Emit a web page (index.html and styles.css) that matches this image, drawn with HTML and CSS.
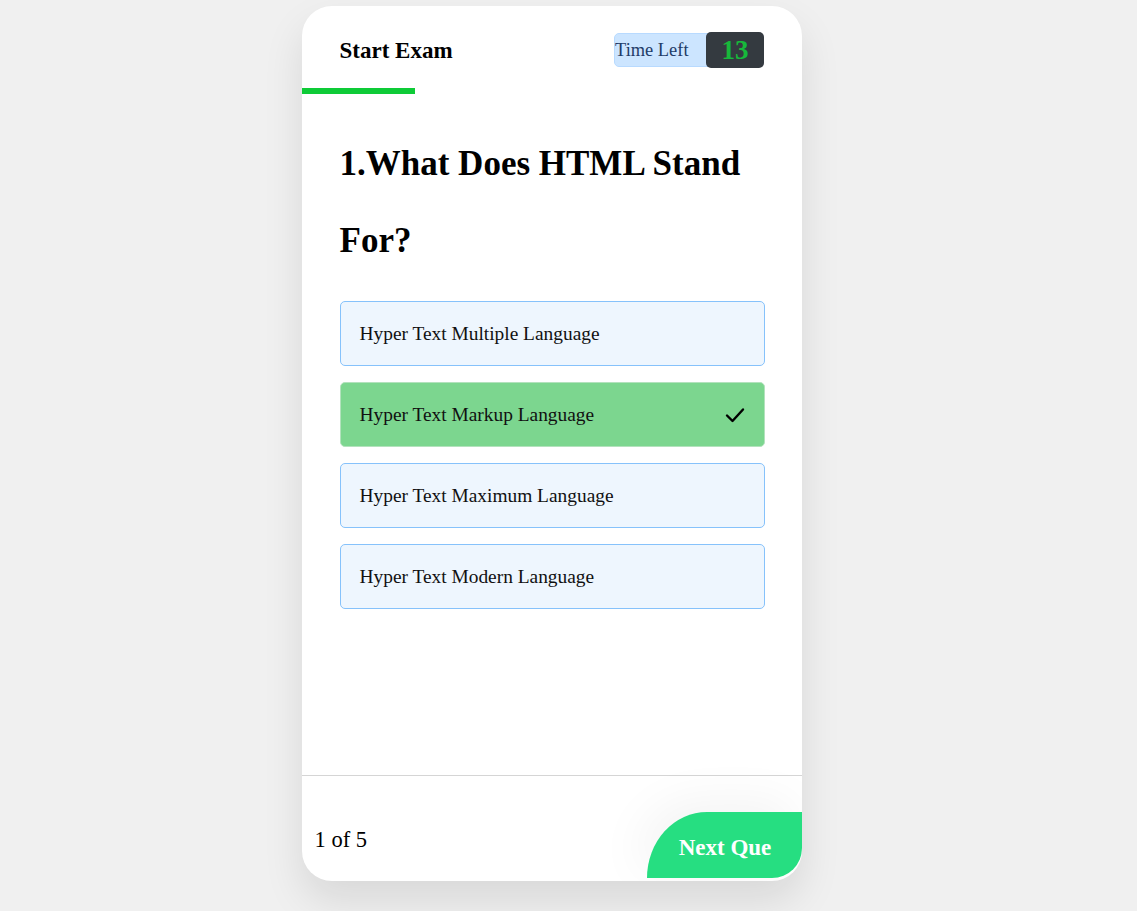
FILE: index.html
```html
<!DOCTYPE html>
<html lang="en">
<head>
    <meta charset="UTF-8">
    <meta name="viewport" content="width=device-width, initial-scale=1.0">
    <title>Quiz</title>
    <link rel="stylesheet" href="styles.css">
</head>
<body>
    <div class="quiz-card">
        <div class="quiz-header">
            <h3 class="title">Start Exam</h3>
            <div class="timer">
                <span class="timer-label">Time Left</span>
                <span class="timer-count">13</span>
            </div>
        </div>
        <div class="progress"></div>

        <div class="quiz-body">
            <h2 class="question">1.What Does HTML Stand For?</h2>
            <ul class="options">
                <li class="option">Hyper Text Multiple Language</li>
                <li class="option correct">
                    Hyper Text Markup Language
                    <svg class="check" width="20" height="16" viewBox="0 0 20 16">
                        <path d="M2 8.5 L7.5 14 L18 2.5" fill="none" stroke="#000" stroke-width="2.4" stroke-linecap="round" stroke-linejoin="round"/>
                    </svg>
                </li>
                <li class="option">Hyper Text Maximum Language</li>
                <li class="option">Hyper Text Modern Language</li>
            </ul>
        </div>

        <div class="quiz-footer">
            <span class="count">1 of 5</span>
            <button class="next-btn">Next Que</button>
        </div>
    </div>
</body>
</html>
```

FILE: styles.css
```css
html {
    background-color: #f0f0f0;
}

body {
    font-family: "Liberation Serif", "Times New Roman", serif;
    background-color: #f0f0f0;
    margin: 0;
    padding: 6px 34px 40px 0;
    min-height: 100vh;
    box-sizing: border-box;
}

.quiz-card {
    width: 500px;
    height: 875px;
    margin: 0 auto;
    background: white;
    border-radius: 30px;
    box-shadow: 0 20px 40px rgba(0, 0, 0, 0.1);
    display: flex;
    flex-direction: column;
    overflow: hidden;
}

.quiz-header {
    display: flex;
    justify-content: space-between;
    align-items: center;
    padding: 26px 38px 21px;
}

.title {
    margin: 0;
    font-size: 23px;
    font-weight: bold;
    color: #000;
    padding-top: 3px;
}

.timer {
    display: flex;
    align-items: stretch;
    background-color: #cce5ff;
    border: 1px solid #b8daff;
    border-radius: 5px;
    height: 32px;
    margin-top: 1px;
}

.timer-label {
    display: flex;
    align-items: center;
    font-size: 18.4px;
    color: #1f3c68;
    padding-right: 17px;
}

.timer-count {
    display: flex;
    align-items: center;
    background-color: #343a40;
    color: #17b83b;
    font-size: 27px;
    font-weight: bold;
    padding: 0 15px 0 16px;
    margin: -2px -1px -2px 0;
    border-radius: 5px;
}

.progress {
    width: 113px;
    height: 6px;
    background-color: #0ecb37;
}

.quiz-body {
    flex: 1;
    padding: 31px 37px 0 38px;
    border-bottom: 1px solid #d5d5d5;
}

.question {
    margin: 0;
    font-size: 35px;
    font-weight: bold;
    line-height: 77px;
    color: #000;
}

.options {
    list-style: none;
    margin: 22px 0 0;
    padding: 0;
    display: flex;
    flex-direction: column;
    gap: 16px;
}

.option {
    display: flex;
    justify-content: space-between;
    align-items: center;
    height: 63px;
    padding: 0 19px;
    font-size: 19.4px;
    color: #111;
    background-color: #eef6fe;
    border: 1px solid #86c2fb;
    border-radius: 5px;
}

.option.correct {
    background-color: #7cd68f;
    border-color: #b3e2bd;
}

.quiz-footer {
    height: 105px;
    display: flex;
    justify-content: space-between;
    align-items: flex-end;
    padding-bottom: 3px;
    box-sizing: border-box;
}

.count {
    font-size: 22.5px;
    color: #000;
    margin: 0 0 25px 13px;
}

.next-btn {
    width: 155px;
    height: 66px;
    border: none;
    background-color: #26de81;
    color: white;
    font-family: "Liberation Serif", "Times New Roman", serif;
    font-size: 23px;
    font-weight: bold;
    padding: 6px 0 0 2px;
    border-radius: 60px 0 30px 0 / 66px 0 30px 0;
    box-shadow: -10px -10px 50px rgba(0, 0, 0, 0.05);
    cursor: pointer;
}
```
